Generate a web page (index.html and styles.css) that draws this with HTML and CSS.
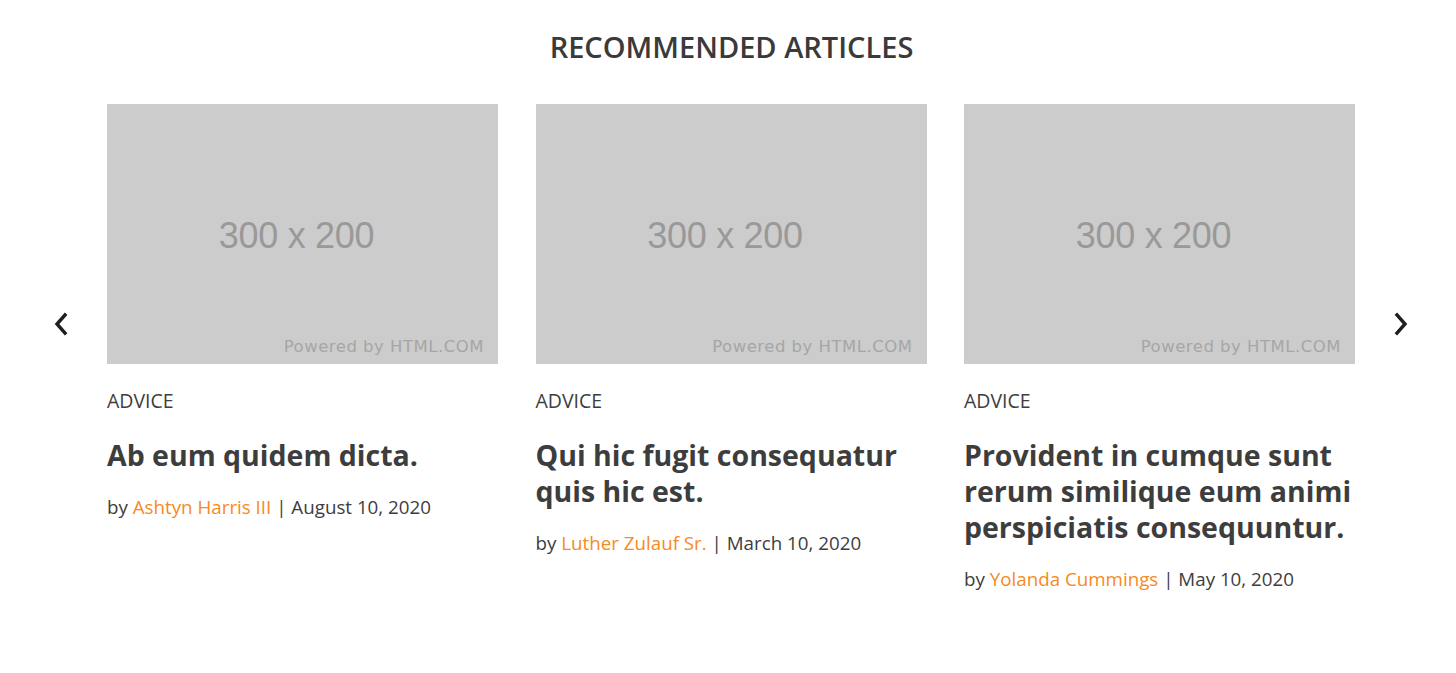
FILE: index.html
```html
<!DOCTYPE html>
<html lang="en">
<head>
<meta charset="utf-8">
<title>Recommended Articles</title>
<link rel="stylesheet" href="styles.css">
</head>
<body>
<section class="recommended">
  <h2 class="section-title">RECOMMENDED ARTICLES</h2>
  <div class="carousel">
    <button class="arrow arrow-prev" aria-label="Previous">
      <svg width="16" height="24" viewBox="0 0 16 24"><path d="M12 3 L4 12 L12 21" fill="none" stroke="#1f1f1f" stroke-width="3.4" stroke-linecap="square"/></svg>
    </button>
    <div class="cards">
      <article class="card">
        <div class="thumb">
          <div class="thumb-main">300 x 200</div>
          <div class="thumb-credit">Powered by HTML.COM</div>
        </div>
        <div class="category">ADVICE</div>
        <h3 class="card-title">Ab eum quidem dicta.</h3>
        <p class="byline">by <a class="author" href="#">Ashtyn Harris III</a> | August 10, 2020</p>
      </article>
      <article class="card">
        <div class="thumb">
          <div class="thumb-main">300 x 200</div>
          <div class="thumb-credit">Powered by HTML.COM</div>
        </div>
        <div class="category">ADVICE</div>
        <h3 class="card-title">Qui hic fugit consequatur quis hic est.</h3>
        <p class="byline">by <a class="author" href="#">Luther Zulauf Sr.</a> | March 10, 2020</p>
      </article>
      <article class="card">
        <div class="thumb">
          <div class="thumb-main">300 x 200</div>
          <div class="thumb-credit">Powered by HTML.COM</div>
        </div>
        <div class="category">ADVICE</div>
        <h3 class="card-title">Provident in cumque sunt rerum similique eum animi perspiciatis consequuntur.</h3>
        <p class="byline">by <a class="author" href="#">Yolanda Cummings</a> | May 10, 2020</p>
      </article>
    </div>
    <button class="arrow arrow-next" aria-label="Next">
      <svg width="16" height="24" viewBox="0 0 16 24"><path d="M4 3 L12 12 L4 21" fill="none" stroke="#1f1f1f" stroke-width="3.4" stroke-linecap="square"/></svg>
    </button>
  </div>
</section>
</body>
</html>
```

FILE: styles.css
```css
* { box-sizing: border-box; }
html, body { margin: 0; padding: 0; background: #fff; }
body {
  font-family: "Open Sans", "Noto Sans", sans-serif;
  color: #3d3d3d;
}
.recommended {
  padding-top: 28px;
}
.section-title {
  margin: 0;
  padding-left: 7px;
  text-align: center;
  font-size: 29px;
  font-weight: 600;
  line-height: 38px;
  color: #3a3a3a;
  letter-spacing: 0;
}
.carousel {
  display: flex;
  align-items: flex-start;
  margin-top: 38px;
}
.arrow {
  flex: 0 0 auto;
  height: 260px;
  background: none;
  border: 0;
  padding: 0 0 28px 0;
  display: flex;
  align-items: flex-end;
  cursor: pointer;
}
.arrow-prev { width: 107px; justify-content: flex-start; padding-left: 53px; }
.arrow-next { width: 101px; justify-content: flex-start; padding-left: 38px; }
.cards {
  display: grid;
  grid-template-columns: repeat(3, 391px);
  column-gap: 37.5px;
}
.card { min-width: 0; }
.thumb {
  height: 260px;
  background: #cccccc;
  display: flex;
  flex-direction: column;
}
.thumb-main {
  flex: 1;
  display: flex;
  align-items: center;
  justify-content: center;
  font-family: "Liberation Sans", Arial, sans-serif;
  font-size: 36px;
  color: #999999;
  padding: 30px 12px 0 0;
  letter-spacing: -0.3px;
}
.thumb-credit {
  text-align: right;
  font-family: "DejaVu Sans", sans-serif;
  font-size: 16.5px;
  color: #a6a6a6;
  padding: 0 14px 8px 0;
  letter-spacing: 0.5px;
}
.category {
  margin-top: 24px;
  font-size: 19.5px;
  line-height: 26px;
  color: #3d3d3d;
}
.card-title {
  margin: 23px 0 0;
  font-size: 28.5px;
  font-weight: 700;
  line-height: 36px;
  color: #3d3d3d;
}
.byline {
  margin: 21px 0 0;
  font-size: 18.75px;
  line-height: 26px;
  color: #3d3d3d;
}
.author {
  color: #f68a23;
  text-decoration: none;
}
```
